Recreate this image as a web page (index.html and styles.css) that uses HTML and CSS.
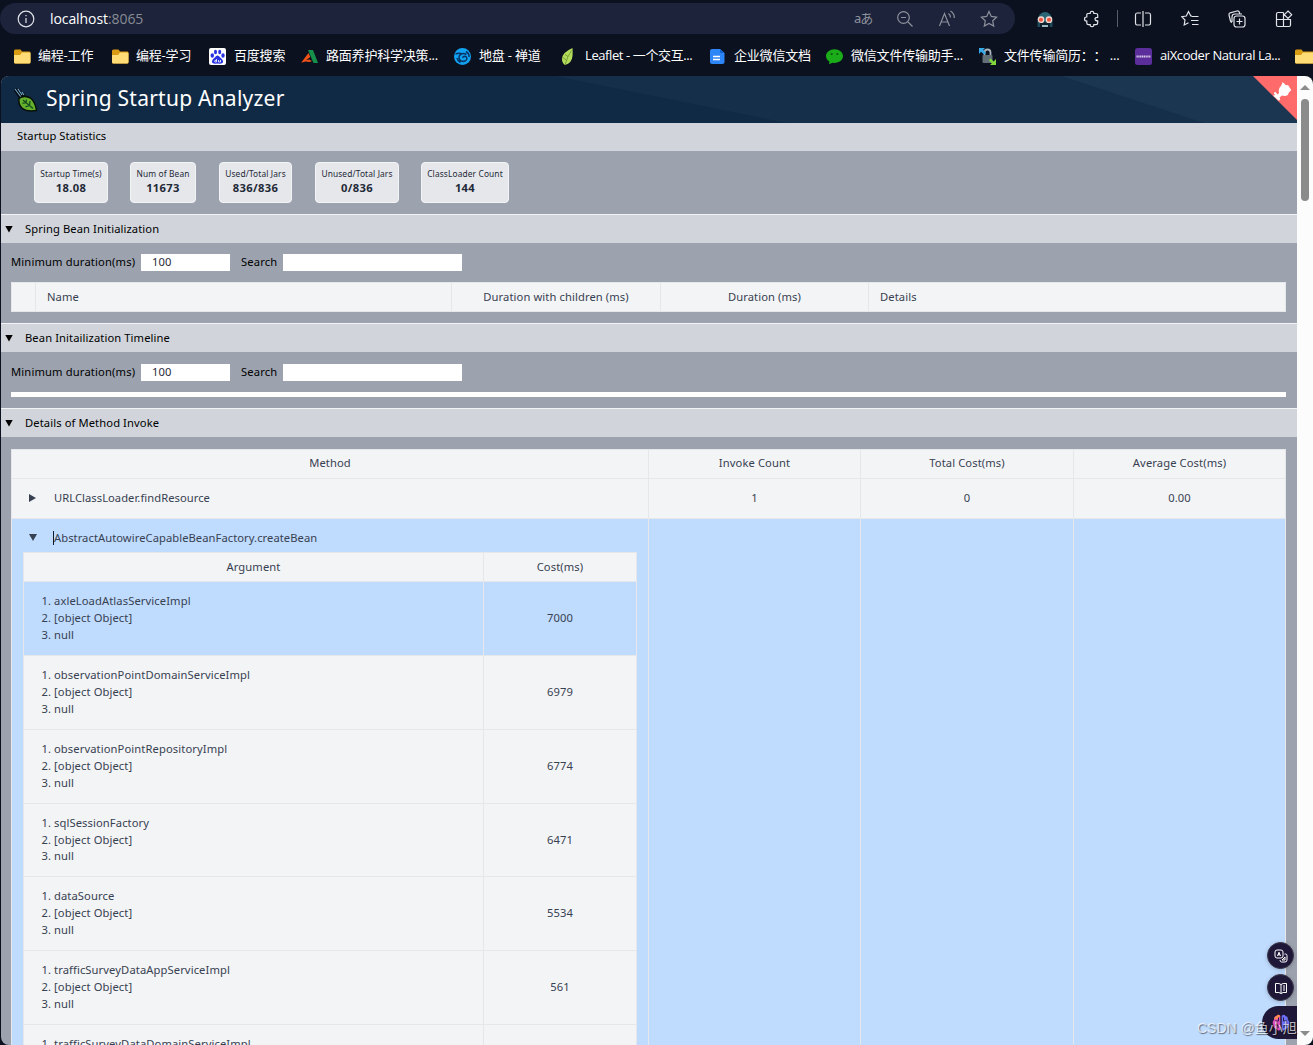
FILE: index.html
```html
<!DOCTYPE html>
<html lang="zh-CN">
<head>
    <meta charset="UTF-8">
    <meta name="viewport" content="width=device-width, initial-scale=1.0">
    <title>Spring Startup Analyzer</title>
    <link rel="stylesheet" href="styles.css">
</head>
<body>
    <!-- Browser toolbar -->
    <div class="toolbar">
        <div class="address">
            <svg class="info" width="18" height="18" viewBox="0 0 18 18"><circle cx="9" cy="9" r="7.8"/><path d="M9 8v5M9 5v1.3"/></svg>
            <span class="url">localhost<span class="port">:8065</span></span>
            <div class="address-icons">
                <span class="translate">aあ</span>
                <svg width="18" height="18" viewBox="0 0 18 18"><circle cx="7.500" cy="7.500" r="5.800"/><path d="M12 12l4.500 4.500M5 7.500h5"/></svg>
                <svg width="18" height="18" viewBox="0 0 18 18"><path d="M1.500 16L6.500 3.500l5 12.500M3.200 12h6.600M10.500 3.500q2 1.500 2 4M12.500 1q4 2.500 3.800 7"/></svg>
                <svg width="18" height="18" viewBox="0 0 18 18"><path d="M9 1.500l2.300 4.900 5.300.7-3.900 3.700 1 5.300L9 13.500l-4.700 2.600 1-5.300L1.400 7.100l5.300-.7z"/></svg>
            </div>
        </div>
        <div class="tools">
            <svg class="robot" width="18" height="18" viewBox="0 0 18 18"><path d="M2 10a7 8 0 0114 0v4H2z" fill="#2c6675"/><path d="M1.500 11h15v6h-15z" fill="#1f4c5a"/><path d="M4 12.500h10V17H4z" fill="#10202c"/><path d="M6 15h6v2H6z" fill="#9db8c1"/><circle cx="5" cy="9.700" r="2.700" fill="#ed5540" stroke="#f1d9d2" stroke-width="1.300"/><circle cx="13" cy="9.700" r="2.700" fill="#ed5540" stroke="#f1d9d2" stroke-width="1.300"/></svg>
            <svg width="18" height="18" viewBox="0 0 18 18"><path d="M3.800 4.500Q4 3.500 5 3.500h2.200Q7 1.300 9 1.300t1.800 2.200H13q1.700 0 1.700 1.500v2.400q-2.700 0-2.700 1.700t2.700 1.700V13q0 1.700-1.700 1.700h-2.200Q11 16.700 9 16.700t-1.800-2H5.400q-1.600 0-1.600-1.700v-2Q1.500 11 1.500 9t2.300-2z"/></svg>
            <i class="divider"></i>
            <svg width="18" height="18" viewBox="0 0 18 18"><path d="M7 3H3Q1.500 3 1.500 5v8q0 2 1.500 2h4M11 3h4q1.500 0 1.500 2v8q0 2-1.500 2h-4M9 1v16"/></svg>
            <svg width="18" height="18" viewBox="0 0 18 18"><path d="M11 6.200l-1.200-.2L7.500 1.500 5.300 6l-4.600.7L4 10l-.8 5L7.500 12.800M11 6.500h6.500M10 10.500h7.500M11 14.500h6.500"/></svg>
            <svg width="18" height="18" viewBox="0 0 18 18"><rect x="6" y="6" width="11" height="11" rx="2.500"/><path d="M11.500 8.500v6M8.500 11.500h6M4 12.500Q2.800 12.300 2.500 11L1 5Q.7 3.300 2.200 2.800L9 1q1.800-.3 2.400 1.300l.4 1.500M4 12V7q0-3 3-3h7"/></svg>
            <svg width="18" height="18" viewBox="0 0 18 18"><path d="M8.500 2.500H3Q1.500 2.500 1.500 4v11q0 1.500 1.500 1.500h11q1.500 0 1.500-1.500V9.500h-14M8.500 2.500v14M13 1l3.700 3.700L13 8.400 9.300 4.700z"/></svg>
        </div>
    </div>

    <!-- Bookmarks -->
    <div class="bookmarks">
        <div class="bookmark"><svg width="18" height="18" viewBox="0 0 18 18"><path d="M1 3q0-1.500 1.500-1.500h5L9 3.500h7.500Q17.500 3.500 17.500 5v9q0 1.500-1.500 1.500H2.500Q1 15.500 1 14z" fill="#d99b13"/><path d="M1 7h6l2-2.500h7.500q1 0 1 1V14q0 1.500-1.500 1.500H2.500Q1 15.500 1 14z" fill="#ffdc75"/></svg><span>编程-工作</span></div>
        <div class="bookmark"><svg width="18" height="18" viewBox="0 0 18 18"><path d="M1 3q0-1.500 1.500-1.500h5L9 3.500h7.500Q17.500 3.500 17.500 5v9q0 1.500-1.500 1.500H2.500Q1 15.500 1 14z" fill="#d99b13"/><path d="M1 7h6l2-2.500h7.500q1 0 1 1V14q0 1.500-1.500 1.500H2.500Q1 15.500 1 14z" fill="#ffdc75"/></svg><span>编程-学习</span></div>
        <div class="bookmark"><svg width="18" height="18" viewBox="0 0 18 18"><rect width="17" height="17" rx="2" fill="#fff"/><g fill="#2932e1"><ellipse cx="3.300" cy="7.500" rx="1.700" ry="2.200"/><ellipse cx="6.500" cy="4" rx="1.500" ry="2.200"/><ellipse cx="10.700" cy="4" rx="1.500" ry="2.200"/><ellipse cx="14" cy="7.500" rx="1.700" ry="2.200"/><path d="M8.500 7.500q1.500 0 2.500 1.700l2.300 2.300q2 3-1 4-1.500.3-3.800 0-2.300.3-3.800 0-3-1-1-4L6 9.200q1-1.700 2.500-1.700z"/></g><path d="M7.500 11v3H6q-.8-.8 0-1.600h1.500M9.500 12v2h2v-2" fill="none" stroke="#fff" stroke-width=".8"/></svg><span>百度搜索</span></div>
        <div class="bookmark"><svg width="18" height="18" viewBox="0 0 18 18"><path d="M7 2h5l5 13h-4.500z" fill="#16914b"/><path d="M7.500 5l1.800 4L5 12.200 8 11.500l3 1.500-2.500 1-4-.5-3.500 1H.3z" fill="#f05218"/></svg><span>路面养护科学决策...</span></div>
        <div class="bookmark"><svg width="18" height="18" viewBox="0 0 18 18"><circle cx="8.500" cy="8.500" r="8.500" fill="#12a2f2"/><path d="M1.500 6Q6 4.500 8 6.500M12.500 6.500Q8 4 5.500 7.500q-1.500 3.500 1.700 5.500 4 1.200 5.500-1.500.7-2.700-2-3.200-2.200 0-1.700 1.700M12 3.500q3.500 2 3 5.500M3 10q.5 3 3.500 4.500" fill="none" stroke="#073263" stroke-width="1.500"/></svg><span>地盘 - 禅道</span></div>
        <div class="bookmark"><svg width="18" height="18" viewBox="0 0 18 18"><path d="M12.500 0Q2 4.500 2 11q0 4 3 6 7-2 7.500-9 .3-4 0-8z" fill="#b4dc5b"/><path d="M11.500 2.500Q7 9 5 17M6 12L3 9.500M8 8.500l-3-2" fill="none" stroke="#668e2c" stroke-width=".8"/></svg><span class="latin">Leaflet - 一个交互...</span></div>
        <div class="bookmark"><svg width="18" height="18" viewBox="0 0 18 18"><path d="M1 3q0-2 2-2h8l4.500 4v9q0 2-2 2H3q-2 0-2-2z" fill="#2c86f7"/><path d="M11 1v4h4.500" fill="#1462cb"/><path d="M4 8.500h7M4 11.500h7" stroke="#fff" stroke-width="1.300"/></svg><span>企业微信文档</span></div>
        <div class="bookmark"><svg width="18" height="18" viewBox="0 0 18 18"><path d="M8.500 1.200c4.700 0 8.500 3 8.500 6.900s-3.800 6.900-8.500 6.900l-2-.2L3 16.300l.4-2.700C1.300 12.400 0 10.400 0 8.100 0 4.200 3.800 1.200 8.500 1.200z" fill="#1aad19"/><circle cx="5.700" cy="6" r="1.100" fill="#0a5a0c"/><circle cx="11.300" cy="6" r="1.100" fill="#0a5a0c"/></svg><span>微信文件传输助手...</span></div>
        <div class="bookmark"><svg width="18" height="18" viewBox="0 0 18 18"><path d="M5.500 8V4.500q0-3 3-3t3 3V8" fill="none" stroke="#a9b5bd" stroke-width="1.800"/><rect x="3.500" y="7" width="10" height="8" rx="1" fill="#637078"/><path d="M0 0h6L4.200 1.800 7 5 5.200 6.500 2 3.800 0 6z" fill="#36aae8"/><path d="M17 17h-6l1.800-1.800-3-3L11.600 10.500l3 3L17 11z" fill="#80d83b"/></svg><span lang="zh-CN">文件传输简历<span class="colons">：：</span>...</span></div>
        <div class="bookmark"><svg width="18" height="18" viewBox="0 0 18 18"><rect width="17" height="17" rx="2.500" fill="#5b2e9c"/><path d="M1.500 8.500h14" stroke="#d9cce9" stroke-width="1.800" stroke-dasharray="1.300 .5"/></svg><span class="latin">aiXcoder Natural La...</span></div>
        <div class="bookmark"><svg width="18" height="18" viewBox="0 0 18 18"><path d="M0 3q0-1.500 1.500-1.500h5L8 3.500h10v12H1.500Q0 15.500 0 14z" fill="#d99b13"/><path d="M0 7h6l2-2.500h10v11H1.500Q0 15.500 0 14z" fill="#ffdc75"/></svg></div>
    </div>

    <div class="viewport">
        <main class="page">
            <header class="header">
                <svg class="backdrop" width="1296" height="47" viewBox="0 0 1296 47"><path d="M554 0h742v47H786z" fill="#152f4b"/><path d="M1061 0h235v47h-93z" fill="#1b3650"/></svg>
                <svg class="logo" width="24" height="26" viewBox="0 0 24 26"><path d="M1 2l6 9M4 3l4 6M8 6l2 3" fill="none" stroke="#050b10" stroke-width="3.500"/><path d="M1 2l6 8M4 2l4 6M8 5l2 3" fill="none" stroke="#77aacd" stroke-width="1.100"/><path d="M5 11.500Q10 7.500 16.500 11q5 4.500 6 12.500-9.500 1.500-14-2T5 11.500z" fill="#66b12c" stroke="#071007" stroke-width="1.500"/><path d="M9 13l10 8.500M12 15.500l.5-3M15.500 18.500l.5-4.500M12 15.500l-3.500.8M15.500 18.500l-4 1.300" fill="none" stroke="#164d20" stroke-width="1.300"/></svg>
                <h1>Spring Startup Analyzer</h1>
                <svg class="corner" width="44" height="44" viewBox="0 0 44 44"><path d="M0 0h44v44z" fill="#ff6b6b"/><path d="M20 19.500l2.500-.5q-2-1-1.500-2.500 1-.8 2 0l1.500 2 1.500-1.500q-.8-3 .5-5.300L28 10l1.700-4 3 3 2.500.3L37 12l1.300 2.200-2.300 2q-.5 3-3 3.500-2 .5-4-.3l-2.500 2 .8 1.800-1.500 1.600z" fill="#fff"/></svg>
            </header>

            <h2 class="section-title plain">Startup Statistics</h2>
            <div class="stats">
                <div class="stat"><span>Startup Time(s)</span><b>18.08</b></div>
                <div class="stat"><span>Num of Bean</span><b>11673</b></div>
                <div class="stat"><span>Used/Total Jars</span><b>836/836</b></div>
                <div class="stat"><span>Unused/Total Jars</span><b>0/836</b></div>
                <div class="stat"><span>ClassLoader Count</span><b>144</b></div>
            </div>

            <h2 class="section-title"><i class="arrow"></i>Spring Bean Initialization</h2>
            <div class="section beans">
                <div class="filters">
                    <label class="duration-label">Minimum duration(ms)</label>
                    <input class="duration" type="text" value="100">
                    <label class="search-label">Search</label>
                    <input class="search" type="text">
                </div>
                <table class="grid bean-table">
                    <tr><th></th><th>Name</th><th>Duration with children (ms)</th><th>Duration (ms)</th><th>Details</th></tr>
                </table>
            </div>

            <h2 class="section-title"><i class="arrow"></i>Bean Initailization Timeline</h2>
            <div class="section timeline">
                <div class="filters">
                    <label class="duration-label">Minimum duration(ms)</label>
                    <input class="duration" type="text" value="100">
                    <label class="search-label">Search</label>
                    <input class="search" type="text">
                </div>
                <div class="timeline-chart"></div>
            </div>

            <h2 class="section-title"><i class="arrow"></i>Details of Method Invoke</h2>
            <div class="section methods">
                <table class="grid method-table">
                    <tr class="method-head"><th>Method</th><th>Invoke Count</th><th>Total Cost(ms)</th><th>Average Cost(ms)</th></tr>
                    <tr class="method-row">
                        <td class="method"><i class="arrow right"></i>URLClassLoader.findResource</td>
                        <td>1</td><td>0</td><td>0.00</td>
                    </tr>
                    <tr class="active">
                        <td class="expanded">
                            <div class="summary"><i class="arrow"></i><span class="caret">AbstractAutowireCapableBeanFactory.createBean</span></div>
                            <table class="grid argument-table">
                                <tr><th>Argument</th><th>Cost(ms)</th></tr>
                                <tr class="active"><td><ol><li>axleLoadAtlasServiceImpl</li><li>[object Object]</li><li>null</li></ol></td><td>7000</td></tr>
                                <tr><td><ol><li>observationPointDomainServiceImpl</li><li>[object Object]</li><li>null</li></ol></td><td>6979</td></tr>
                                <tr><td><ol><li>observationPointRepositoryImpl</li><li>[object Object]</li><li>null</li></ol></td><td>6774</td></tr>
                                <tr class="short"><td><ol><li>sqlSessionFactory</li><li>[object Object]</li><li>null</li></ol></td><td>6471</td></tr>
                                <tr><td><ol><li>dataSource</li><li>[object Object]</li><li>null</li></ol></td><td>5534</td></tr>
                                <tr><td><ol><li>trafficSurveyDataAppServiceImpl</li><li>[object Object]</li><li>null</li></ol></td><td>561</td></tr>
                                <tr><td><ol><li>trafficSurveyDataDomainServiceImpl</li></ol></td><td></td></tr>
                            </table>
                        </td>
                        <td></td><td></td><td></td>
                    </tr>
                </table>
            </div>
        </main>
        <div class="scrollbar"><i class="scroll-up"></i><i class="thumb"></i><i class="scroll-down"></i></div>
    </div>

    <!-- Floating buttons -->
    <div class="floating">
        <div class="fab"><svg width="14" height="14" viewBox="0 0 14 14"><rect x="1" y="1" width="8" height="8" rx="2"/><path d="M3.500 7L5 3.200 6.500 7M4 5.800h2M10.500 5h1q1.500 0 1.500 1.500V11q0 2-2 2H7.500Q6 13 6 11M8 11l3-3v3z"/></svg></div>
        <div class="fab"><svg width="14" height="14" viewBox="0 0 14 14"><path d="M7 3.500Q5.500 2 1.500 2.500v9q4-.5 5.500 1 1.500-1.500 5.500-1v-9Q8.500 2 7 3.500v9M9 5h2M9 7h2M9 9h2"/></svg></div>
        <div class="assistant">
            <svg width="18" height="18" viewBox="0 0 18 18"><path d="M8.300 2Q6-.5 4.500 2 1.500 2.500 2.300 5.500-.5 8 1.500 11q-.3 3.500 3 4 2.500 3 3.800.5z" fill="#e04dbc"/><path d="M9.700 2Q12-.5 13.500 2q3 .5 2.200 3.500Q18.500 8 16.500 11q.3 3.500-3 4-2.500 3-3.800.5z" fill="#6c70f4"/><path d="M4.500 2Q2 2.500 2.300 5.500l3-.5 3-3Q6-.5 4.500 2z" fill="#ff8b4d"/><path d="M6.500 3.500v3.500H3M3 11h3v3M11.500 3.500v3.500H15M15 11h-3v3" fill="none" stroke="#1e1738" stroke-width=".9"/></svg>
        </div>
    </div>
    <div class="watermark">CSDN @鱼小旭</div>
</body>
</html>
```
FILE: styles.css
```css
* {
    box-sizing: border-box;
}
body {
    margin: 0;
    height: 1045px;
    overflow: hidden;
    background: #0b111f;
    font-family: "Noto Sans", "Noto Sans CJK SC", sans-serif;
    font-size: 11.2px;
    line-height: 16.8px;
    letter-spacing: 0.1px;
    color: #000;
}
svg {
    display: block;
    flex: none;
}

/* Browser chrome */
.toolbar {
    display: flex;
    height: 37px;
    padding-top: 3px;
}
.address {
    display: flex;
    flex: none;
    align-items: center;
    width: 1015px;
    height: 31px;
    padding: 0 17px;
    border-radius: 16px;
    background: #1c233b;
}
.address svg, .tools svg {
    fill: none;
    stroke: #8e919b;
    stroke-width: 1.2;
}
.address .info {
    stroke: #dfe1e7;
}
.url {
    margin: 1px 0 0 15px;
    font-family: "Open Sans", sans-serif;
    font-size: 14px;
    letter-spacing: -0.08px;
    color: #fff;
}
.port {
    color: #888b94;
}
.address-icons {
    display: flex;
    align-items: center;
    gap: 24px;
    margin-left: auto;
}
.translate {
    width: 18px;
    color: #8e919b;
    font-size: 13px;
    letter-spacing: -1px;
    white-space: nowrap;
}
.tools {
    display: flex;
    flex: none;
    align-items: center;
    height: 31px;
    padding-left: 21px;
}
.tools svg {
    margin-right: 29px;
    stroke: #e2e4e9;
}
.tools .robot {
    stroke: none;
}
.tools svg:last-child {
    margin-right: 0;
}
.divider {
    width: 1px;
    height: 17px;
    margin: 0 16px 0 -13px;
    background: #585d6b;
}
.bookmarks {
    display: flex;
    align-items: center;
    height: 39px;
    padding: 0 0 2px 13px;
    overflow: hidden;
}
.bookmark {
    display: flex;
    align-items: center;
    flex: none;
    gap: 7px;
    width: 98px;
    color: #fff;
    font-family: "Open Sans", "Noto Sans CJK SC", sans-serif;
    font-size: 13px;
    letter-spacing: -0.2px;
    white-space: nowrap;
}
.bookmark svg {
    position: relative;
    top: 1px;
}
.bookmark:nth-child(3) { width: 92px; }
.bookmark:nth-child(4) { width: 153px; }
.bookmark:nth-child(5) { width: 106px; }
.bookmark:nth-child(6) { width: 149px; }
.bookmark:nth-child(7) { width: 117px; }
.bookmark:nth-child(8) { width: 153px; }
.bookmark:nth-child(9) { width: 156px; }
.bookmark:nth-child(10) { width: 160px; }
.bookmark .latin {
    letter-spacing: -0.4px;
}
.colons {
    display: inline-block;
    width: 29px;
    font-feature-settings: "chws" 0, "palt" 0;
    text-spacing-trim: space-all;
}

/* Page */
.viewport {
    display: flex;
    height: 969px;
    padding-left: 1px;
}
.page {
    width: 1296px;
    overflow: hidden;
    border-radius: 8px 0 0 8px;
    background: #9ca3af;
}
.header {
    position: relative;
    display: flex;
    align-items: center;
    height: 47px;
    padding-left: 13px;
    background: #102a46;
}
.backdrop {
    position: absolute;
    top: 0;
    left: 0;
}
.header h1 {
    margin: 0 0 4px 8px;
    font-size: 21px;
    font-weight: 400;
    line-height: 30px;
    letter-spacing: 0.24px;
    color: #fff;
}
.corner {
    position: absolute;
    top: 0;
    right: 0;
}
.section-title {
    display: flex;
    align-items: center;
    height: 29px;
    margin: 0;
    padding: 0 0 0 4px;
    border-top: 1px solid #f3f4f6;
    background: #d1d5db;
    font-size: 11.2px;
    font-weight: 400;
}
.section-title.plain {
    height: 28px;
    padding: 0 0 2px 16px;
    border: 0;
    letter-spacing: 0.06px;
}
.section-title .arrow {
    margin-right: 12px;
}
.arrow {
    display: inline-block;
    width: 8px;
    height: 7px;
    background: currentColor;
    clip-path: polygon(0 0, 100% 0, 50% 100%);
}
.arrow.right {
    width: 7px;
    height: 8px;
    clip-path: polygon(0 0, 100% 50%, 0 100%);
}
.stats {
    display: flex;
    gap: 22px;
    height: 63px;
    padding: 11px 0 0 33px;
}
.stat {
    display: flex;
    flex-direction: column;
    align-items: center;
    width: 74px;
    height: 41px;
    padding-top: 5px;
    border: 1px solid #f3f4f6;
    border-radius: 4px;
    background: #e5e7eb;
    color: #1f2937;
    white-space: nowrap;
}
.stat:nth-child(2) { width: 66px; margin-right: 1px; }
.stat:nth-child(3) { width: 73px; margin-right: 1px; }
.stat:nth-child(4) { width: 84px; }
.stat:nth-child(5) { width: 88px; }
.stat span {
    font-size: 8.4px;
    line-height: 12px;
    letter-spacing: 0.12px;
}
.stat b {
    line-height: 16px;
    letter-spacing: 0.35px;
}
.section {
    padding: 10px 10px 0;
}
.beans {
    height: 80px;
}
.timeline {
    height: 56px;
    padding-top: 11px;
}
.filters {
    display: flex;
    align-items: center;
    height: 18px;
}
.filters input {
    height: 17px;
    padding: 0 11px 1px;
    border: 0;
    background: #fff;
    color: #1f2937;
    font: inherit;
    letter-spacing: inherit;
}
.duration-label {
    width: 130px;
    letter-spacing: 0.15px;
}
.filters .duration {
    width: 89px;
    margin-right: 11px;
}
.search-label {
    width: 42px;
    letter-spacing: 0.15px;
}
.filters .search {
    width: 179px;
}
.timeline-chart {
    width: 1275px;
    height: 5px;
    margin-top: 11px;
    background: #fff;
}

/* Tables */
.grid {
    width: 1275px;
    border-collapse: separate;
    border-spacing: 0;
    table-layout: fixed;
    border-top: 1px solid #e5e7eb;
    border-left: 1px solid #e5e7eb;
    background: #f3f4f6;
    color: #374151;
}
.grid th, .grid td {
    padding: 0;
    border-right: 1px solid #e5e7eb;
    border-bottom: 1px solid #e5e7eb;
    font-weight: 400;
    text-align: center;
}
.grid th {
    height: 29px;
}
.grid .active {
    background: #bfdbfe;
}
.bean-table {
    margin-top: 11px;
}
.bean-table th:nth-child(1) { width: 24px; }
.bean-table th:nth-child(2) { width: 416px; }
.bean-table th:nth-child(3) { width: 209px; }
.bean-table th:nth-child(4) { width: 208px; }
.bean-table th:nth-child(2), .bean-table th:nth-child(5) {
    padding-left: 11px;
    text-align: left;
}
.methods {
    padding-top: 12px;
}
.method-table th:nth-child(1) { width: 637px; }
.method-table th:nth-child(2) { width: 212px; }
.method-table th:nth-child(3) { width: 213px; }
.method-table .method-head th {
    padding-bottom: 2px;
}
.method-row td {
    height: 40px;
}
.method-row .method {
    padding-left: 17px;
    text-align: left;
    letter-spacing: 0.05px;
}
.method .arrow {
    margin-right: 18px;
}
.method-table .expanded {
    padding: 10px 11px 11px;
    text-align: left;
    vertical-align: top;
}
.summary {
    display: flex;
    align-items: center;
    height: 17px;
    padding-left: 6px;
    letter-spacing: 0.06px;
}
.caret {
    margin-left: 16px;
    border-left: 1px solid #111827;
    line-height: 14px;
}
.argument-table {
    width: 614px;
    margin-top: 6px;
}
.method-table .argument-table th:nth-child(1) { width: 460px; }
.method-table .argument-table th:nth-child(2) { width: 153px; }
.argument-table td {
    height: 74px;
}
.argument-table .short td {
    height: 73px;
}
.argument-table td:first-child {
    text-align: left;
}
.argument-table tr:last-child td {
    padding-top: 11px;
    vertical-align: top;
}
.argument-table ol {
    margin: 0;
    padding-left: 30px;
}

/* Scrollbar */
.scrollbar {
    position: relative;
    width: 16px;
    border-radius: 0 8px 8px 0;
    background: #fcfcfc;
}
.thumb {
    position: absolute;
    top: 23px;
    left: 4px;
    width: 8px;
    height: 102px;
    border-radius: 4px;
    background: #8b8b8b;
}
.scroll-up, .scroll-down {
    position: absolute;
    top: 9px;
    left: 3px;
    width: 10px;
    height: 5px;
    background: #8b8b8b;
    clip-path: polygon(50% 0, 100% 100%, 0 100%);
}
.scroll-down {
    top: auto;
    bottom: 9px;
    transform: rotate(180deg);
}

/* Overlays */
.floating {
    position: absolute;
    top: 942px;
    right: 16px;
    display: flex;
    flex-direction: column;
    align-items: flex-end;
    gap: 5px;
}
.fab {
    display: flex;
    align-items: center;
    justify-content: center;
    width: 27px;
    height: 27px;
    margin-right: 3px;
    border: 1px solid #393646;
    border-radius: 50%;
    background: #1e1738;
    box-shadow: 0 1px 4px rgba(0,0,0,0.2);
}
.fab svg {
    fill: none;
    stroke: #fff;
    stroke-width: 1;
}
.assistant {
    display: flex;
    align-items: center;
    width: 35px;
    height: 33px;
    padding-left: 10px;
    border-radius: 17px 0 0 17px;
    background: #1e1738;
}
.watermark {
    position: absolute;
    top: 1019px;
    left: 1197px;
    color: rgba(255,255,255,0.7);
    font-family: "Liberation Sans", "Noto Sans CJK SC", sans-serif;
    font-size: 14px;
    line-height: 18px;
    letter-spacing: 0;
    white-space: nowrap;
    text-shadow: 1px 1px 1px rgba(0,0,0,0.5);
}
```
